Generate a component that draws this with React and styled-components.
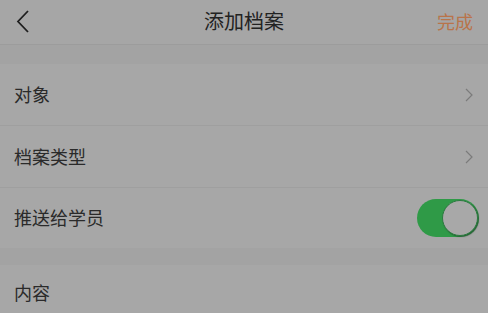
import React, { useState } from "react";
import styled, { createGlobalStyle } from "styled-components";

const GlobalStyle = createGlobalStyle`
  html, body {
    margin: 0;
    padding: 0;
    background: #a6a6a6;
    font-family: "Noto Sans CJK SC", "Noto Sans", sans-serif;
  }
`;

const Page = styled.div`
  width: 488px;
  height: 313px;
  overflow: hidden;
  background: #a3a3a3;
`;

const Header = styled.div`
  height: 44px;
  display: grid;
  grid-template-columns: 80px 1fr 80px;
  align-items: center;
  background: #a6a6a6;
  border-bottom: 1px solid #9c9c9c;
`;

const Back = styled.div`
  display: flex;
  align-items: center;
  padding-left: 15px;
`;

const Title = styled.div`
  text-align: center;
  font-size: 20px;
  color: #222;
  line-height: 1;
  margin-top: -2px;
`;

const Done = styled.div`
  text-align: right;
  padding-right: 15px;
  font-size: 18px;
  color: #b9744a;
  line-height: 1;
  margin-top: -2px;
`;

const Group = styled.div`
  margin-top: ${(p) => p.gap}px;
  background: #a7a7a7;
`;

const Row = styled.div`
  height: ${(p) => p.h || 61}px;
  display: flex;
  align-items: center;
  justify-content: space-between;
  padding: 0 ${(p) => (p.toggle ? 9 : 15)}px 0 14px;
  border-bottom: ${(p) => (p.last ? "none" : "1px solid #9f9f9f")};
`;

const Label = styled.span`
  font-size: 18px;
  color: #2a2a2a;
  line-height: 1;
  margin-top: -2px;
`;

const Switch = styled.div`
  width: 62px;
  height: 38px;
  border-radius: 19px;
  background: #2f9a47;
  display: flex;
  align-items: center;
  justify-content: flex-end;
  box-sizing: border-box;
  padding: 1px;
`;

const Knob = styled.div`
  width: 36px;
  height: 36px;
  border-radius: 50%;
  box-sizing: border-box;
  background: #a8a8a8;
  border: 1.5px solid #2b7a3f;
  box-shadow: 1px 1px 1px rgba(30, 70, 40, 0.6);
`;

const Chevron = () => (
  <svg width="8" height="14" viewBox="0 0 8 14">
    <path d="M1 1 L7 7 L1 13" fill="none" stroke="#7b7b7b" strokeWidth="1.2" />
  </svg>
);

export default function App() {
  const [push, setPush] = useState(true);
  return (
    <>
      <GlobalStyle />
      <Page>
        <Header>
          <Back>
            <svg width="16" height="24" viewBox="0 0 16 24">
              <path d="M13 1 L3 11.5 L13 22" fill="none" stroke="#1f1f1f" strokeWidth="1.8" />
            </svg>
          </Back>
          <Title>添加档案</Title>
          <Done>完成</Done>
        </Header>
        <Group gap={19}>
          <Row>
            <Label>对象</Label>
            <Chevron />
          </Row>
          <Row>
            <Label>档案类型</Label>
            <Chevron />
          </Row>
          <Row toggle last h={60} onClick={() => setPush(!push)}>
            <Label>推送给学员</Label>
            <Switch>
              <Knob />
            </Switch>
          </Row>
        </Group>
        <Group gap={17}>
          <Row last h={56}>
            <Label>内容</Label>
          </Row>
        </Group>
      </Page>
    </>
  );
}
